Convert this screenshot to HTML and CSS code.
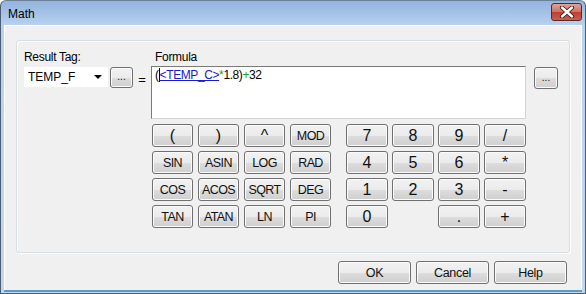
FILE: index.html
```html
<!DOCTYPE html>
<html lang="en">
<head>
    <meta charset="UTF-8">
    <title>Math</title>
    <link rel="stylesheet" href="styles.css">
</head>
<body>
    <div class="window">
        <div class="titlebar">
            <span class="title">Math</span>
            <div class="close">
                <svg width="16" height="12" viewBox="0 0 16 12">
                    <path d="M3 1.5 L13 10.5 M13 1.5 L3 10.5" stroke="#3a1c1c" stroke-width="4.2" stroke-linecap="round"/>
                    <path d="M3 1.5 L13 10.5 M13 1.5 L3 10.5" stroke="#ffffff" stroke-width="2.4" stroke-linecap="round"/>
                </svg>
            </div>
        </div>
        <div class="client">
            <div class="group">
                <div class="tag-col">
                    <div class="label">Result Tag:</div>
                    <div class="tag-row">
                        <div class="combo">
                            <span>TEMP_F</span>
                            <span class="arrow"></span>
                        </div>
                        <div class="btn small">...</div>
                    </div>
                </div>
                <div class="eq">=</div>
                <div class="formula-col">
                    <div class="label formula-label">Formula</div>
                    <div class="formula-row">
                        <div class="formula">
                            <span class="caret">(</span><span class="tag">&lt;TEMP_C&gt;</span><span class="op">*</span>1.8)<span class="op">+</span>32
                        </div>
                        <div class="btn browse">...</div>
                    </div>
                    <div class="keypad">
                        <div class="keys funcs">
                            <div class="btn big">(</div>
                            <div class="btn big">)</div>
                            <div class="btn big">^</div>
                            <div class="btn">MOD</div>
                            <div class="btn">SIN</div>
                            <div class="btn">ASIN</div>
                            <div class="btn">LOG</div>
                            <div class="btn">RAD</div>
                            <div class="btn">COS</div>
                            <div class="btn">ACOS</div>
                            <div class="btn">SQRT</div>
                            <div class="btn">DEG</div>
                            <div class="btn">TAN</div>
                            <div class="btn">ATAN</div>
                            <div class="btn">LN</div>
                            <div class="btn">PI</div>
                        </div>
                        <div class="keys digits">
                            <div class="btn big">7</div>
                            <div class="btn big">8</div>
                            <div class="btn big">9</div>
                            <div class="btn big">/</div>
                            <div class="btn big">4</div>
                            <div class="btn big">5</div>
                            <div class="btn big">6</div>
                            <div class="btn big">*</div>
                            <div class="btn big">1</div>
                            <div class="btn big">2</div>
                            <div class="btn big">3</div>
                            <div class="btn big">-</div>
                            <div class="btn big">0</div>
                            <div></div>
                            <div class="btn big">.</div>
                            <div class="btn big">+</div>
                        </div>
                    </div>
                </div>
            </div>
            <div class="actions">
                <div class="btn action">OK</div>
                <div class="btn action">Cancel</div>
                <div class="btn action">Help</div>
            </div>
        </div>
    </div>
</body>
</html>
```

FILE: styles.css
```css
body {
    margin: 0;
    padding: 0;
    background-color: #ffffff;
    font-family: "Liberation Sans", Arial, sans-serif;
    font-size: 11px;
    color: #000;
}
.window {
    width: 586px;
    height: 294px;
    box-sizing: border-box;
    border: 1px solid #4a5d73;
    border-top-color: #6b7f96;
    border-radius: 6px 6px 0 0;
    background: linear-gradient(#93b4de, #b9d2ee 25px, #c1d7ef);
    display: flex;
    flex-direction: column;
    padding: 0 3px 3px 3px;
    overflow: hidden;
}
.titlebar {
    height: 24px;
    display: flex;
    align-items: center;
    justify-content: space-between;
}
.title {
    font-size: 12px;
    padding-left: 4px;
    padding-top: 1px;
}
.close {
    width: 29px;
    height: 16px;
    border: 1px solid #5b2a28;
    border-radius: 3px;
    background: linear-gradient(#e2a296, #cf6f62 50%, #bb3f32 51%, #c85f50);
    display: flex;
    align-items: center;
    justify-content: center;
    margin-top: -3px;
}
.client {
    flex: 1;
    background-color: #f0f0f0;
    border: 1px solid #ffffff;
    border-bottom: none;
    display: flex;
    flex-direction: column;
    box-shadow: 0 2px 0 #5f9ac3;
}
.group {
    margin: 14px 11px 0 11px;
    height: 213px;
    box-sizing: border-box;
    border: 1px solid #d5dfe5;
    border-radius: 3px;
    box-shadow: inset 1px 1px 0 #ffffff, 1px 1px 0 #ffffff;
    display: flex;
    padding: 9px 0 0 7px;
}
.label {
    height: 14px;
    line-height: 14px;
    font-size: 12px;
    letter-spacing: -0.3px;
}
.tag-col {
    width: 109px;
}
.tag-row {
    display: flex;
    margin-top: 3px;
    gap: 2px;
}
.combo {
    width: 84px;
    height: 20px;
    box-sizing: border-box;
    background: #ffffff;
    display: flex;
    align-items: center;
    justify-content: space-between;
    padding: 0 6px 0 4px;
    font-size: 12px;
}
.arrow {
    width: 0;
    height: 0;
    border-left: 4px solid transparent;
    border-right: 4px solid transparent;
    border-top: 4px solid #000;
}
.eq {
    width: 18px;
    text-align: center;
    padding-top: 22px;
    font-size: 13px;
}
.formula-label {
    padding-left: 4px;
}
.formula-row {
    display: flex;
    margin-top: 2px;
}
.formula {
    width: 375px;
    height: 53px;
    box-sizing: border-box;
    background: #ffffff;
    border: 1px solid #d3d3d3;
    border-top-color: #7a7a7a;
    border-left-color: #7a7a7a;
    padding: 1px 3px;
    line-height: 14px;
    font-size: 12px;
    letter-spacing: -0.4px;
}
.caret {
    border-right: 1px solid #000;
}
.tag {
    color: #1a1acc;
    text-decoration: underline;
}
.op {
    color: #1aa31a;
}
.btn {
    box-sizing: border-box;
    border: 1px solid #707070;
    border-radius: 3px;
    background: linear-gradient(#f2f2f2, #ebebeb 50%, #dddddd 51%, #cfcfcf);
    box-shadow: inset 0 0 0 1px #fbfbfb;
    display: flex;
    align-items: center;
    justify-content: center;
    font-size: 12.5px;
    letter-spacing: -0.6px;
    color: #111;
}
.btn.small {
    width: 23px;
    height: 21px;
    font-size: 10px;
    letter-spacing: 0;
    padding-bottom: 2px;
}
.btn.browse {
    width: 24px;
    height: 22px;
    margin: 1px 0 0 8px;
    font-size: 10px;
    letter-spacing: 0;
    padding-bottom: 2px;
}
.btn.big {
    font-size: 16px;
    letter-spacing: 0;
}
.keypad {
    display: flex;
    margin: 5px 0 0 1px;
    gap: 15px;
}
.keys {
    display: grid;
    grid-template-rows: repeat(4, 23px);
    row-gap: 4px;
}
.funcs {
    grid-template-columns: repeat(4, 41px);
    column-gap: 5px;
}
.digits {
    grid-template-columns: repeat(4, 42px);
    column-gap: 4px;
}
.actions {
    display: flex;
    justify-content: flex-end;
    gap: 5px;
    padding: 8px 14px 0 0;
}
.btn.action {
    width: 73px;
    height: 23px;
    font-size: 12.5px;
    letter-spacing: -0.3px;
}
```
